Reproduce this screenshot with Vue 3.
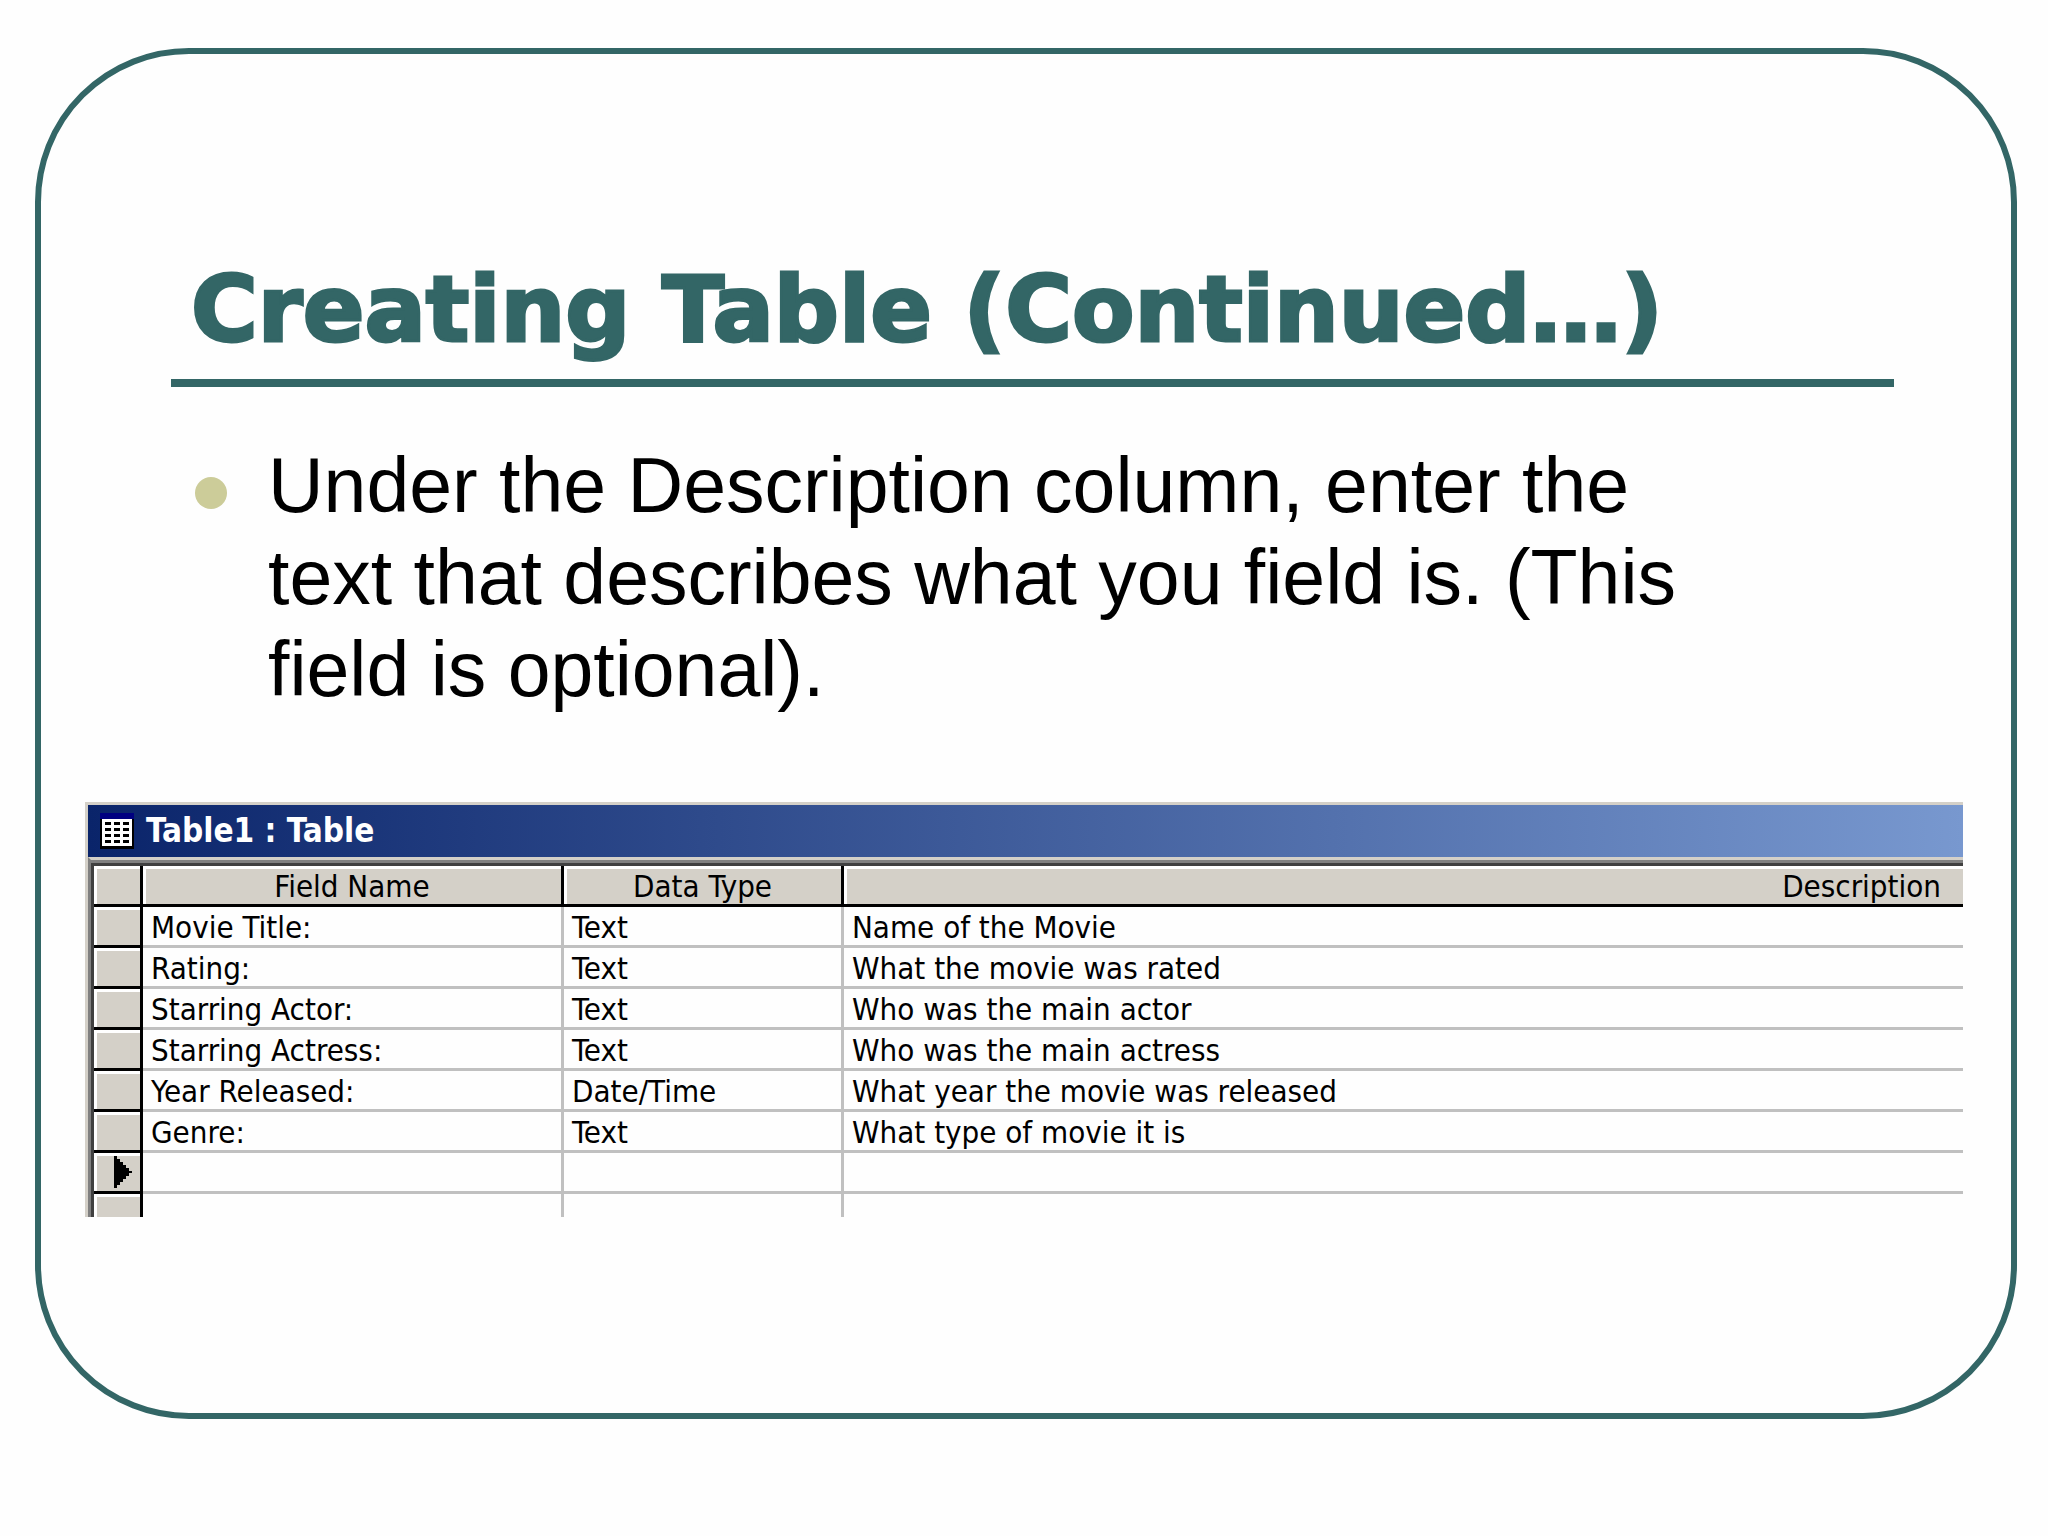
<script setup>
const columns = ['Field Name', 'Data Type', 'Description']

const fields = [
  { name: 'Movie Title:', type: 'Text', description: 'Name of the Movie' },
  { name: 'Rating:', type: 'Text', description: 'What the movie was rated' },
  { name: 'Starring Actor:', type: 'Text', description: 'Who was the main actor' },
  { name: 'Starring Actress:', type: 'Text', description: 'Who was the main actress' },
  { name: 'Year Released:', type: 'Date/Time', description: 'What year the movie was released' },
  { name: 'Genre:', type: 'Text', description: 'What type of movie it is' },
  { name: '', type: '', description: '', current: true },
  { name: '', type: '', description: '', partial: true },
]
</script>

<template>
  <main class="slide">
    <article class="frame">
      <h1 class="title">Creating Table (Continued…)</h1>
      <ul class="points">
        <li class="point">
          <span class="bullet" aria-hidden="true"></span>
          <p class="point-text">Under the Description column, enter the text that describes what you field is. (This field is optional).</p>
        </li>
      </ul>

      <section class="window" aria-labelledby="window-title">
        <header class="title-bar">
          <svg class="table-icon" viewBox="0 0 34 36" shape-rendering="crispEdges" aria-hidden="true">
            <rect x="0" y="0" width="34" height="36" fill="#000" />
            <rect x="0" y="0" width="34" height="6" fill="#000080" />
            <rect x="2" y="6" width="30" height="27" fill="#fff" />
            <g fill="#000">
              <path d="M5 9h6v3h-6zM14 9h6v3h-6zM23 9h6v3h-6z" />
              <path d="M5 15h6v3h-6zM14 15h6v3h-6zM23 15h6v3h-6z" />
              <path d="M5 21h6v3h-6zM14 21h6v3h-6zM23 21h6v3h-6z" />
              <path d="M5 27h6v3h-6zM14 27h6v3h-6zM23 27h6v3h-6z" />
            </g>
          </svg>
          <h2 id="window-title" class="window-title">Table1 : Table</h2>
        </header>
        <div class="sheet">
          <table class="grid">
            <colgroup>
              <col class="col-selector" />
              <col class="col-name" />
              <col class="col-type" />
              <col />
            </colgroup>
            <thead>
              <tr>
                <td class="selector"></td>
                <th v-for="column in columns" :key="column" scope="col">{{ column }}</th>
              </tr>
            </thead>
            <tbody>
              <tr v-for="(field, i) in fields" :key="i" :class="{ partial: field.partial }">
                <td class="selector">
                  <svg v-if="field.current" class="marker" viewBox="0 0 18 32" role="img" aria-label="Current row">
                    <path d="M0 0h3v3h3v3h3v3h3v3h3v3h3v2h-3v3h-3v3h-3v3h-3v3h-3v3h-3z" />
                  </svg>
                </td>
                <td>{{ field.name }}</td>
                <td>{{ field.type }}</td>
                <td>{{ field.description }}</td>
              </tr>
            </tbody>
          </table>
        </div>
      </section>
    </article>
  </main>
</template>

<style>
body {
  margin: 0;
  background: #fefefe;
}
</style>

<style scoped>
.slide {
  padding: 48px 31px 117px 35px;
}

.frame {
  padding: 210px 48px 196px 44px;
  border: 6px solid #336666;
  border-radius: 154px;
}

.title {
  margin: 0 69px 0 86px;
  padding: 0 20px 23px;
  border-bottom: 8px solid #336666;
  color: #336666;
  font: 700 91px/92px "DejaVu Sans", sans-serif;
  -webkit-text-stroke: 3px #336666;
}

.points {
  margin: 52px 240px 87px 110px;
  padding: 0;
  list-style: none;
}

.point {
  display: flex;
  gap: 41px;
}

.bullet {
  flex: none;
  width: 32px;
  height: 32px;
  margin-top: 38px;
  border-radius: 50%;
  background: #cccc99;
}

.point-text {
  margin: 0;
  color: #000;
  font: 77px/92px "Liberation Sans", Arial, sans-serif;
}

.window {
  border-top: 3px solid #d4d0c8;
  border-left: 3px solid #d4d0c8;
  font-family: "DejaVu Sans Condensed", "DejaVu Sans", sans-serif;
}

.title-bar {
  display: flex;
  align-items: center;
  gap: 12px;
  height: 52px;
  padding-left: 12px;
  background: linear-gradient(90deg, #0a246a, #7898cf);
}

.table-icon {
  width: 34px;
  height: 36px;
}

.window-title {
  margin: 0;
  color: #fff;
  font-size: 33px;
  line-height: 52px;
  font-weight: 700;
}

.sheet {
  border-top: 3px solid #d4d0c8;
  border-left: 3px solid #808080;
}

.grid {
  width: 100%;
  table-layout: fixed;
  border-collapse: separate;
  border-spacing: 0;
  border-top: 3px solid #404040;
  border-left: 3px solid #404040;
  box-shadow: 0 -3px #808080;
  margin-top: 3px;
  color: #000;
  font-size: 31px;
}

.sheet {
  display: flow-root;
}

.col-selector {
  width: 49px;
}

.col-name {
  width: 421px;
}

.col-type {
  width: 280px;
}

.grid th,
.grid td {
  box-sizing: border-box;
  height: 41px;
  padding: 2px 8px 0;
  border-right: 3px solid #c0c0c0;
  border-bottom: 3px solid #c0c0c0;
  line-height: 36px;
  font-weight: 400;
  text-align: left;
  white-space: nowrap;
}

.grid th,
.grid .selector {
  border-color: #000;
  background: #d4d0c8;
  box-shadow: inset 3px 3px #fff;
}

.grid th {
  text-align: center;
}

.grid th:last-child {
  padding-right: 22px;
  text-align: right;
}

.grid th:last-child,
.grid td:last-child {
  border-right: 0;
}

.grid .selector {
  padding: 0 0 0 20px;
}

.marker {
  display: block;
  width: 18px;
  height: 32px;
}

.grid .partial td {
  height: 23px;
  border-bottom: 0;
}
</style>
